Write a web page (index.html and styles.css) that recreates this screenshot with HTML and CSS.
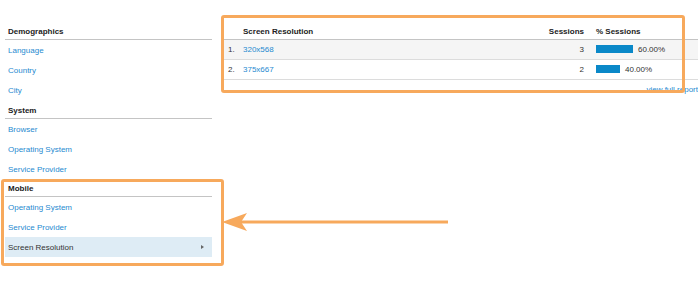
FILE: index.html
```html
<!DOCTYPE html>
<html lang="en">
  <head>
    <meta charset="UTF-8" />
    <meta name="viewport" content="width=device-width, initial-scale=1.0" />
    <title>Screen Resolution</title>
    <link rel="stylesheet" href="styles.css">
  </head>
  <body>
    <div class="page">
      <div class="sidebar">
        <div class="group">
          <div class="group-title">Demographics</div>
          <a class="item">Language</a>
          <a class="item">Country</a>
          <a class="item">City</a>
        </div>
        <div class="group system">
          <div class="group-title">System</div>
          <a class="item">Browser</a>
          <a class="item">Operating System</a>
          <a class="item">Service Provider</a>
        </div>
        <div class="group mobile">
          <div class="group-title">Mobile</div>
          <a class="item">Operating System</a>
          <a class="item">Service Provider</a>
          <a class="item active">Screen Resolution <span class="caret"></span></a>
        </div>
      </div>

      <div class="main">
        <table class="report">
          <colgroup>
            <col class="c-num" />
            <col class="c-name" />
            <col class="c-sessions" />
            <col class="c-pct" />
          </colgroup>
          <thead>
            <tr>
              <th></th>
              <th class="left">Screen Resolution</th>
              <th class="right">Sessions</th>
              <th class="left pct-head">% Sessions</th>
            </tr>
          </thead>
          <tbody>
            <tr class="odd">
              <td class="num">1.</td>
              <td><a>320x568</a></td>
              <td class="right">3</td>
              <td class="pct"><span class="bar" style="width: 37px"></span>60.00%</td>
            </tr>
            <tr>
              <td class="num">2.</td>
              <td><a>375x667</a></td>
              <td class="right">2</td>
              <td class="pct"><span class="bar" style="width: 24px"></span>40.00%</td>
            </tr>
          </tbody>
        </table>
        <div class="full-report"><a>view full report</a></div>
        <div class="callout"></div>
      </div>

      <svg class="arrow" width="232" height="24" viewBox="0 0 232 24">
        <line x1="14" y1="12" x2="228" y2="12" stroke="#f7a95c" stroke-width="3" />
        <path d="M2 12 L27 3 L21 12 L27 21 Z" fill="#f7a95c" />
      </svg>
    </div>
  </body>
</html>
```

FILE: styles.css
```css
* {
  margin: 0;
  box-sizing: border-box;
}

body {
  font-family: "Liberation Sans", Arial, sans-serif;
  font-size: 8px;
  color: #333;
  background: #fff;
  width: 698px;
  height: 290px;
  overflow: hidden;
}

a {
  color: #1f8ad0;
  text-decoration: none;
}

.page {
  position: relative;
  display: flex;
  align-items: flex-start;
  padding-left: 5px;
}

/* left nav */
.sidebar {
  width: 207px;
  flex: none;
  margin-top: 25px;
}

.group-title {
  font-weight: bold;
  color: #222;
  line-height: 14px;
  padding-left: 3px;
  border-bottom: 1px solid #c4c4c4;
}

.item {
  display: flex;
  align-items: center;
  justify-content: space-between;
  height: 20px;
  padding: 0 8px 0 3px;
}

.system {
  margin-top: 4px;
}

.mobile {
  margin: 0 -12px 0 -4px;
  padding: 0 9px 6px 1px;
  border: 3px solid #f7a95c;
  border-radius: 3px;
}

.item.active {
  background: #deecf5;
  color: #333;
}

.caret {
  width: 0;
  height: 0;
  border-left: 3px solid #666;
  border-top: 2.5px solid transparent;
  border-bottom: 2.5px solid transparent;
}

/* report table */
.main {
  position: relative;
  margin-left: 12px;
  padding-top: 18px;
  flex: none;
  width: 474px;
}

.report {
  width: 474px;
  table-layout: fixed;
  border-collapse: collapse;
}

.c-num { width: 19px; }
.c-name { width: 302px; }
.c-sessions { width: 50px; }
.c-pct { width: 103px; }

.report th {
  font-weight: bold;
  color: #222;
  padding: 7px 0 0;
  line-height: 14px;
  border-bottom: 1px solid #c4c4c4;
}

.report td {
  height: 20px;
  padding: 0;
  border-bottom: 1px solid #dcdcdc;
}

.report .left { text-align: left; }
.report .right { text-align: right; padding-right: 11px; }

.report .num {
  padding-left: 4px;
}

.report tr.odd td {
  background: #f5f5f5;
}

.report .pct,
.report .pct-head {
  padding-left: 1px;
}

.bar {
  display: inline-block;
  height: 8px;
  margin-right: 5px;
  vertical-align: -1px;
  background: #0a88c8;
}

.full-report {
  margin-top: 4px;
  line-height: 12px;
  text-align: right;
}

/* annotations */
.callout {
  position: absolute;
  left: -3px;
  top: 15px;
  width: 464px;
  height: 78px;
  border: 3px solid #f7a95c;
  border-radius: 3px;
  pointer-events: none;
}

.arrow {
  position: absolute;
  left: 220px;
  top: 210px;
}
```
